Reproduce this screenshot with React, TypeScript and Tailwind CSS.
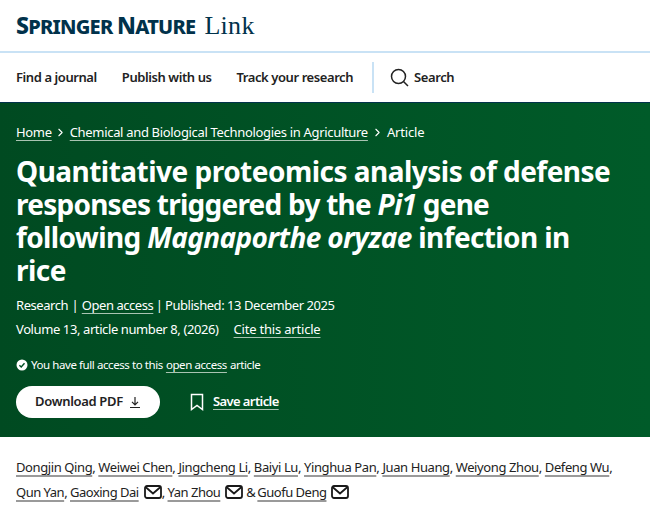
import { ChevronRight } from 'lucide-react';

const font = { fontFamily: '"Noto Sans", sans-serif' };

function Mail() {
  return (
    <svg width="18" height="14" viewBox="0 0 18 14" fill="none" stroke="#1a1a1a" strokeWidth="1.8" className="inline-block ml-[5px] align-[-2px]">
      <rect x="1" y="1" width="16" height="12" rx="2" />
      <path d="M1.500 2l7.500 6.500 7.500-6.500" />
    </svg>
  );
}

function Author({ name }: { name: string }) {
  return <span className="underline decoration-[#9a9a9a] decoration-2 underline-offset-[3px]">{name}</span>;
}

export default function App() {
  const firstRow = ['Dongjin Qing', 'Weiwei Chen', 'Jingcheng Li', 'Baiyi Lu', 'Yinghua Pan', 'Juan Huang', 'Weiyong Zhou', 'Defeng Wu'];

  return (
    <div className="w-[650px] h-[511px] overflow-hidden bg-white text-[#222]" style={font}>
      <header className="h-[53px] flex items-center pl-4 border-b-2 border-[#c9e2f5] text-[#01324b]">
        <span className="text-[20px] font-extrabold tracking-[-0.75px] leading-none">
          <span className="text-[23px]">S</span>PRINGER <span className="text-[23px]">N</span>ATURE
        </span>
        <span className="ml-[9px] text-[26px] leading-none tracking-[0.3px]" style={{ fontFamily: '"Liberation Serif", serif' }}>Link</span>
      </header>

      <nav className="h-[49px] flex items-center pl-4 text-[13px] font-semibold tracking-[-0.42px] text-[#222]">
        <span>Find a journal</span>
        <span className="ml-[25px]">Publish with us</span>
        <span className="ml-[25px]">Track your research</span>
        <div className="ml-[19px] w-[2px] h-[31px] bg-[#c9e2f5]" />
        <svg width="19" height="19" viewBox="0 0 19 19" fill="none" stroke="#222" strokeWidth="1.5" className="ml-4">
          <circle cx="8.500" cy="8.500" r="7" />
          <path d="M13.500 13.500l4.500 4.500" />
        </svg>
        <span className="ml-[5px]">Search</span>
      </nav>

      <section className="h-[335px] border-t border-[#01324b] bg-gradient-to-r from-[#004a21] to-[#005b29] pl-4 pt-[20px] text-white">
        <div className="flex items-center text-[13px] leading-[18px] tracking-[-0.32px]">
          <span className="underline decoration-[#a9c4b2] underline-offset-[3px]">Home</span>
          <ChevronRight size={13} strokeWidth={2} className="ml-[2px] mr-[3px]" />
          <span className="underline decoration-[#a9c4b2] underline-offset-[3px]">Chemical and Biological Technologies in Agriculture</span>
          <ChevronRight size={13} strokeWidth={2} className="ml-[3px] mr-[3px]" />
          <span className="tracking-[-0.15px]">Article</span>
        </div>

        <h1 className="mt-[14px] text-[28px] leading-[33px] font-bold tracking-[-0.52px]">
          Quantitative proteomics analysis of defense<br />
          <span className="tracking-[-0.75px]">responses triggered by the <em>Pi1</em> gene</span><br />
          <span className="tracking-[-0.62px]">following <em>Magnaporthe oryzae</em> infection in</span><br />
          rice
        </h1>

        <div className="mt-[6px] flex items-center text-[13px] leading-[24px] tracking-[-0.45px]">
          <span>Research</span>
          <span className="mx-[3.5px]">|</span>
          <span className="underline decoration-[#a9c4b2] underline-offset-[3px]">Open access</span>
          <span className="mx-[2.5px]">|</span>
          <span>Published: 13 December 2025</span>
        </div>
        <div className="flex items-center text-[13px] leading-[24px] tracking-[-0.4px]">
          <span>Volume 13, article number 8, (2026)</span>
          <span className="ml-[15px] tracking-[-0.2px] underline decoration-[#a9c4b2] underline-offset-[3px]">Cite this article</span>
        </div>

        <div className="mt-[14px] flex items-center text-[11.5px] leading-[20px] tracking-[-0.42px]">
          <svg width="12" height="12" viewBox="0 0 12 12" className="mr-[3px]">
            <circle cx="6" cy="6" r="5.500" fill="white" />
            <path d="M3.400 6.200l1.800 1.700 3.300-3.600" fill="none" stroke="#004f24" strokeWidth="1.400" />
          </svg>
          <span>You have full access to this</span>
          <span className="ml-[3px] underline decoration-[#a9c4b2] underline-offset-[3px]">open access</span>
          <span className="ml-[3px]">article</span>
        </div>

        <div className="mt-[11px] flex items-center">
          <div className="w-[144px] h-[32px] rounded-full bg-white text-[#222] flex items-center justify-center text-[13px] font-semibold tracking-[-0.32px]">
            Download PDF
            <svg width="12" height="13" viewBox="0 0 12 13" fill="none" stroke="#222" strokeWidth="1.200" className="ml-[6px]">
              <path d="M6 1v7.500M3 5.800l3 3 3-3M1 11.500h10" />
            </svg>
          </div>
          <svg width="14" height="18" viewBox="0 0 14 18" fill="none" stroke="white" strokeWidth="1.500" className="ml-[30px]">
            <path d="M1.500 1.500h11v15l-5.500-4-5.500 4z" />
          </svg>
          <span className="ml-[9px] text-[13px] font-semibold tracking-[-0.6px] underline decoration-[#a9c4b2] underline-offset-[3px]">Save article</span>
        </div>
      </section>

      <div className="pl-4 pt-[18px] text-[13px] leading-[25px] tracking-[-0.4px] text-[#222]">
        <div>
          {firstRow.map((name) => (
            <span key={name}><Author name={name} />, </span>
          ))}
        </div>
        <div className="tracking-[-0.5px]">
          <Author name="Qun Yan" />, <Author name="Gaoxing Dai" /><Mail />, <Author name="Yan Zhou" /><Mail /><span className="ml-[3px] mr-[2px]">&amp;</span><Author name="Guofu Deng" /><Mail />
        </div>
      </div>
    </div>
  );
}
